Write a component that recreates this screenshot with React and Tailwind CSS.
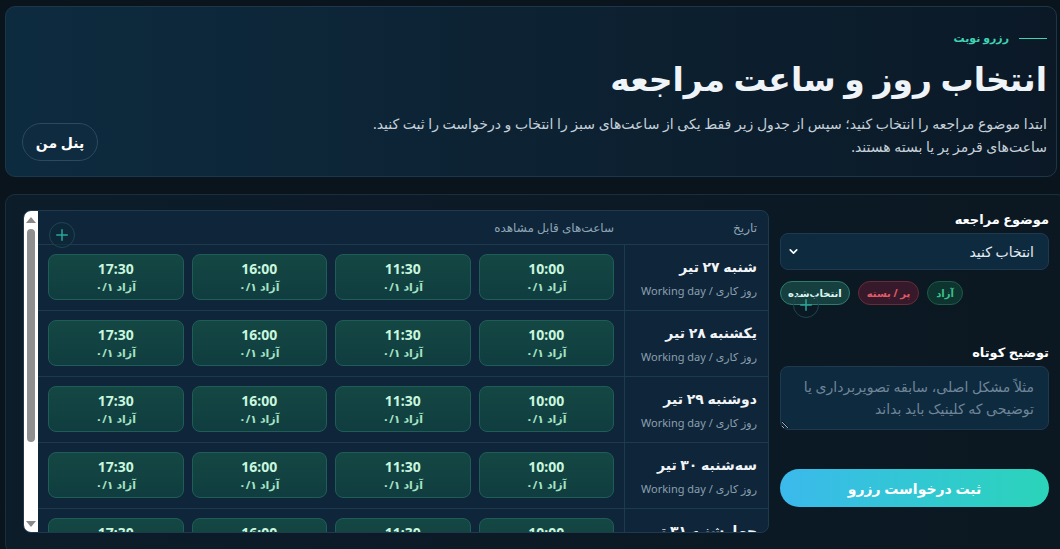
import React from 'react';
import { ChevronDown, Plus } from 'lucide-react';

const days = [
  'شنبه ۲۷ تیر',
  'یکشنبه ۲۸ تیر',
  'دوشنبه ۲۹ تیر',
  'سه‌شنبه ۳۰ تیر',
  'چهارشنبه ۳۱ تیر',
  'پنجشنبه ۱ مرداد',
];

const times = ['10:00', '11:30', '16:00', '17:30'];

const PlusBubble = ({ className }) => (
  <div className={`absolute z-10 w-[26px] h-[26px] rounded-full border border-[#1d4652] flex items-center justify-center ${className}`}>
    <Plus className="w-[18px] h-[18px] text-[#2aa596]" strokeWidth={2} />
  </div>
);

const ScrollTrack = () => (
  <div className="w-[14px] shrink-0 bg-white flex flex-col items-center pt-[6px] pb-[5px]">
    <div className="w-0 h-0 border-l-[5px] border-r-[5px] border-b-[6px] border-l-transparent border-r-transparent border-b-[#8a8a8a]" />
    <div className="mt-[6px] w-[8px] h-[213px] rounded-full bg-[#8f8f8f]" />
    <div className="flex-1" />
    <div className="w-0 h-0 border-l-[5px] border-r-[5px] border-t-[6px] border-l-transparent border-r-transparent border-t-[#8a8a8a]" />
  </div>
);

const Slot = ({ time }) => (
  <button className="h-[46px] rounded-[8px] border border-[#1e5e57] bg-linear-to-b from-[#144743] to-[#103d40] flex flex-col items-center justify-center">
    <span className="text-[14px] font-bold leading-[18px] text-[#c8f6de]">{time}</span>
    <span className="text-[11px] font-bold leading-[14px] text-[#a5e2c3] mt-[2px]">آزاد ۰/۱</span>
  </button>
);

const DayRow = ({ label }) => (
  <div className="h-[66px] shrink-0 flex border-b border-[#1e3a4e]">
    <div className="w-[144px] shrink-0 border-l border-[#1e3a4e] pr-[11px] flex flex-col justify-center">
      <span className="text-[14px] font-bold leading-[20px] text-[#f1f5f8]">{label}</span>
      <span className="text-[11px] leading-[16px] text-[#8ba0b0] mt-[6px]">روز کاری / Working day</span>
    </div>
    <div className="flex-1 grid grid-cols-4 gap-[8px] px-[10px] py-[9px]">
      {times.map((t) => (
        <Slot key={t} time={t} />
      ))}
    </div>
  </div>
);

export default function App() {
  return (
    <div
      dir="rtl"
      className="w-[1060px] h-[549px] overflow-hidden bg-[#0a141c] pt-[6px] [font-family:'Noto_Sans','DejaVu_Sans',sans-serif]"
    >
      {/* page head */}
      <header className="ml-[5px] mr-[3px] h-[171px] rounded-[10px] border border-[#1d3648] bg-linear-to-r from-[#0d2b3f] to-[#0b1927] flex items-end justify-between pr-[9px] pl-[16px] pt-[24px] pb-[15px]">
        <div className="self-start flex flex-col">
          <div className="flex items-center gap-[10px]">
            <span className="w-[28px] h-px bg-[#3fd3b4]" />
            <span className="text-[11px] font-bold leading-[14px] text-[#3fd3b4]">رزرو نوبت</span>
          </div>
          <h1 className="mt-[11px] text-[33px] font-bold leading-[46px] text-[#eef4f8]">انتخاب روز و ساعت مراجعه</h1>
          <p className="mt-[10px] text-[14px] leading-[23px] text-[#c5d0d9]">
            ابتدا موضوع مراجعه را انتخاب کنید؛ سپس از جدول زیر فقط یکی از ساعت‌های سبز را انتخاب و درخواست را ثبت کنید.
            <br />
            ساعت‌های قرمز پر یا بسته هستند.
          </p>
        </div>
        <button className="h-[38px] w-[76px] rounded-full border border-[#2b4a5f] bg-[#0e2b3f] text-[14px] font-bold text-white">
          پنل من
        </button>
      </header>

      {/* booking body */}
      <section className="mt-[17px] ml-[5px] mr-[-7px] rounded-[10px] border border-[#1a2f3e] bg-linear-to-r from-[#0c1c29] to-[#0b1822] pt-[15px] px-[17px] pb-[20px] flex gap-[11px]">
        {/* form side */}
        <div className="relative w-[269px] shrink-0 flex flex-col">
          <label className="text-[13px] font-bold leading-[18px] text-white">موضوع مراجعه</label>
          <div className="mt-[5px] h-[37px] rounded-[8px] border border-[#1f3a4f] bg-[#0e2a3f] flex items-center justify-between pr-[14px] pl-[6px]">
            <span className="text-[14px] text-[#e6edf2]">انتخاب کنید</span>
            <ChevronDown className="w-[13px] h-[13px] text-white" strokeWidth={3} />
          </div>
          <div className="mt-[11px] flex justify-end gap-[8px]">
            <span className="h-[24px] px-[8px] rounded-full border border-[#1d5a48] bg-[#0e3430] text-[10px] font-bold text-[#3cbf8a] flex items-center">آزاد</span>
            <span className="h-[24px] px-[8px] rounded-full border border-[#6a2a36] bg-[#36192a] text-[10px] font-bold text-[#e35b66] flex items-center">پر / بسته</span>
            <span className="h-[24px] px-[7px] rounded-full border border-[#2d7c70] bg-[#15403f] text-[10px] font-bold text-[#dcf5ee] flex items-center">انتخاب‌شده</span>
          </div>
          <PlusBubble className="left-[13px] top-[82px]" />

          <label className="mt-[38px] text-[13px] font-bold leading-[18px] text-white">توضیح کوتاه</label>
          <textarea
            className="mt-[5px] h-[64px] rounded-[8px] border border-[#1f3a4f] bg-[#0e2a3f] px-[14px] py-[9px] text-[14px] leading-[22px] text-white placeholder:text-[#6f8598] outline-none"
            placeholder="مثلاً مشکل اصلی، سابقه تصویربرداری یا توضیحی که کلینیک باید بداند"
          />

          <button className="mt-[39px] h-[38px] rounded-full bg-linear-to-r from-[#3bb9ec] to-[#2bd4b9] text-[14px] font-bold text-white">
            ثبت درخواست رزرو
          </button>
        </div>

        {/* schedule table */}
        <div className="w-[746px] h-[323px] shrink-0 rounded-[8px] border border-[#1e3a4e] bg-[#0f2539] overflow-hidden flex">
          <div className="relative flex-1 flex flex-col overflow-hidden">
            <div className="h-[34px] shrink-0 flex border-b border-[#1e3a4e]">
              <div className="w-[144px] shrink-0 pr-[11px] flex items-center text-[12px] tracking-[0.5px] text-[#8ea5b6]">تاریخ</div>
              <div className="flex-1 pr-[10px] flex items-center text-[12px] tracking-[0.5px] text-[#8ea5b6]">ساعت‌های قابل مشاهده</div>
            </div>
            {days.map((d) => (
              <DayRow key={d} label={d} />
            ))}
            <PlusBubble className="left-[11px] top-[11px] bg-[#0e2a38]/60" />
          </div>
          <ScrollTrack />
        </div>
      </section>
    </div>
  );
}
